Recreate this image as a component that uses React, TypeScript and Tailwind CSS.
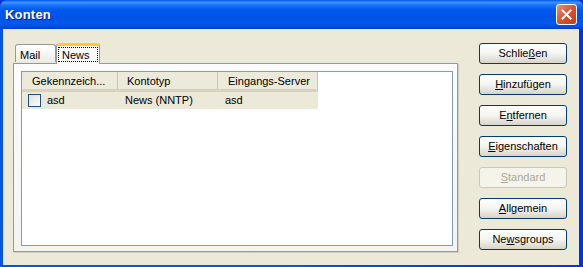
import React from "react";

const font = { fontFamily: "Tahoma, 'Liberation Sans', 'DejaVu Sans', sans-serif" };

interface BtnProps {
  pre: string;
  key1: string;
  post: string;
  disabled?: boolean;
}

const XpButton = ({ pre, key1, post, disabled }: BtnProps) => (
  <div
    className={`h-[21px] w-[88px] flex items-center justify-center rounded-[3px] border text-[11px] ${
      disabled
        ? "border-[#c9c7ba] bg-[#f5f4ea] text-[#aca899]"
        : "border-[#003c74] bg-gradient-to-b from-[#ffffff] via-[#f4f4f0] to-[#d8d3c6] text-black"
    }`}
  >
    <span>
      {pre}
      <span className="underline underline-offset-[1px]">{key1}</span>
      {post}
    </span>
  </div>
);

const App = () => {
  return (
    <div className="w-[583px] h-[267px] flex flex-col bg-[#0831d9] overflow-hidden" style={font}>
      {/* title bar */}
      <div className="h-[29px] shrink-0 flex items-center justify-between pl-[5px] pr-[6px] rounded-t-[7px] bg-[linear-gradient(to_bottom,#0058ee_0%,#3d93ff_9%,#1a72fa_18%,#0058ee_35%,#0054e3_60%,#0058ee_85%,#0049d8_100%)] border-b border-[#0040c8]">
        <span
          className="text-white font-bold text-[13px] tracking-[0.2px] mt-[1px]"
          style={{ fontFamily: "'Liberation Sans', sans-serif", textShadow: "1px 1px #0a1883" }}
        >
          Konten
        </span>
        <div className="w-[21px] h-[21px] rounded-[3px] border border-white bg-gradient-to-br from-[#e8917a] via-[#d5532f] to-[#c23f16] flex items-center justify-center">
          <svg width="11" height="11" viewBox="0 0 11 11">
            <path d="M1.5 1.5 L9.5 9.5 M9.5 1.5 L1.5 9.5" stroke="white" strokeWidth="2" strokeLinecap="square" />
          </svg>
        </div>
      </div>

      {/* frame + client */}
      <div className="flex-1 flex pl-[3px] pr-[4px] pb-[2px] bg-gradient-to-r from-[#0055e5] via-[#0055e5] to-[#0831d9]">
        <div className="flex-1 bg-[#ece9d8] flex pl-[10px] pt-[13px]">
          {/* left: tabs */}
          <div className="w-[445px] flex flex-col">
            <div className="flex items-end h-[21px] pl-[2px] text-[11px] text-black">
              <div className="h-[18px] w-[41px] mb-[1px] pl-[4px] pt-[2px] border border-b-0 border-[#919b9c] rounded-t-[3px] bg-gradient-to-b from-[#ffffff] to-[#ecebe5]">
                Mail
              </div>
              <div className="relative h-[21px] w-[44px] -mb-[1px] bg-[#fcfcfe] border-x border-[#919b9c] border-t-[3px] border-t-[#ffc83c] rounded-t-[3px] z-10">
                <div className="absolute left-[1px] top-[1px] w-[40px] h-[15px] border border-dotted border-black" />
                <span className="absolute left-[5px] top-[1px]">News</span>
              </div>
            </div>
            <div className="h-[189px] border border-[#919b9c] bg-gradient-to-b from-[#fcfcfe] to-[#f4f3ee] pt-[7px] pl-[7px] shadow-[1px_1px_0_#d0cec3]">
              <div className="w-[432px] h-[175px] border border-[#7f9db9] bg-white text-[11px] text-black">
                {/* header */}
                <div className="flex h-[20px] w-[296px] bg-[#ebeadb] border-b-[3px] border-[#d6d2c2]">
                  <div className="w-[96px] pl-[10px] flex items-center border-r border-[#c7c5b2]">
                    <span className="mt-[2px]">Gekennzeich...</span>
                  </div>
                  <div className="w-[100px] pl-[9px] flex items-center border-r border-[#c7c5b2]">
                    <span className="mt-[2px]">Kontotyp</span>
                  </div>
                  <div className="w-[100px] pl-[10px] flex items-center border-r border-[#c7c5b2]">
                    <span className="mt-[2px]">Eingangs-Server</span>
                  </div>
                </div>
                {/* row */}
                <div className="flex items-center h-[17px] w-[296px] bg-[#ece9d8]">
                  <div className="w-[96px] flex items-center pl-[6px]">
                    <div className="w-[13px] h-[13px] border border-[#1c5180] bg-gradient-to-br from-[#dcdcd7] to-[#ffffff]" />
                    <span className="ml-[6px]">asd</span>
                  </div>
                  <div className="w-[100px] pl-[7px]">News (NNTP)</div>
                  <div className="w-[100px] pl-[7px]">asd</div>
                </div>
              </div>
            </div>
          </div>

          {/* right: buttons */}
          <div className="ml-[21px] pt-[1px] flex flex-col gap-[10px]">
            <XpButton pre="Schlie" key1="ß" post="en" />
            <XpButton pre="" key1="H" post="inzufügen" />
            <XpButton pre="E" key1="n" post="tfernen" />
            <XpButton pre="" key1="E" post="igenschaften" />
            <XpButton pre="" key1="S" post="tandard" disabled />
            <XpButton pre="" key1="A" post="llgemein" />
            <XpButton pre="Ne" key1="w" post="sgroups" />
          </div>
        </div>
      </div>
    </div>
  );
};

export default App;
